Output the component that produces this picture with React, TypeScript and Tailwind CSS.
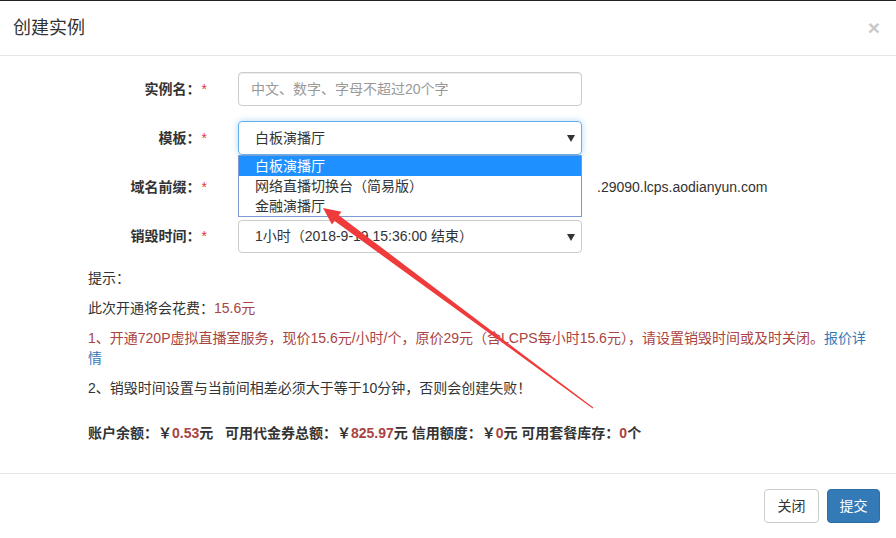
import React from "react";

const font = { fontFamily: '"Liberation Sans", "Noto Sans CJK SC", sans-serif' };

function Label({ text }: { text: string }) {
  return (
    <div className="w-[207px] mr-[31px] text-right font-bold text-[14px] text-[#333] leading-[34px]">
      {text}
      <span className="text-[#e4393c] font-normal ml-[1px]">*</span>
    </div>
  );
}

function Caret() {
  return (
    <span className="absolute right-[6px] top-[13px] w-0 h-0 border-l-[4px] border-r-[4px] border-t-[7px] border-l-transparent border-r-transparent border-t-[#333]" />
  );
}

export default function App() {
  return (
    <div className="relative w-[896px] h-[538px] bg-white text-[14px] text-[#333] overflow-hidden border-t border-[#222]" style={font}>
      {/* header */}
      <div className="h-[55px] border-b border-[#e5e5e5] flex items-center justify-between pl-[13px] pr-[16px]">
        <h4 className="text-[18px] text-[#333] leading-none">创建实例</h4>
        <span className="text-[21px] font-bold text-[#c8c8c8] leading-none -mt-[2px]">×</span>
      </div>

      {/* body */}
      <div className="h-[417px] pt-[16px]">
        <div className="flex items-center mb-[15px]">
          <Label text="实例名：" />
          <div className="w-[344px] h-[34px] border border-[#ccc] rounded-[4px] px-[12px] flex items-center text-[#999] shadow-[inset_0_1px_1px_rgba(0,0,0,0.075)]">
            中文、数字、字母不超过20个字
          </div>
        </div>

        <div className="flex items-center mb-[15px]">
          <Label text="模板：" />
          <div className="relative w-[344px] h-[34px] border border-[#66afe9] rounded-[4px] pl-[16px] flex items-center text-[#333] shadow-[0_0_6px_rgba(102,175,233,0.5)]">
            白板演播厅
            <Caret />
            <div className="absolute left-[-1px] top-[33px] w-[344px] h-[62px] bg-white border border-[#7a9cd3] z-10 text-[14px]">
              <div className="h-[20px] leading-[20px] pl-[16px] bg-[#1e90ff] text-white">白板演播厅</div>
              <div className="h-[20px] leading-[20px] pl-[16px] text-[#333]">网络直播切换台（简易版）</div>
              <div className="h-[20px] leading-[20px] pl-[16px] text-[#333]">金融演播厅</div>
            </div>
          </div>
        </div>

        <div className="flex items-center mb-[15px]">
          <Label text="域名前缀：" />
          <div className="w-[344px] h-[34px] border border-[#ccc] rounded-[4px]" />
          <span className="ml-[15px] text-[#333]">.29090.lcps.aodianyun.com</span>
        </div>

        <div className="flex items-center mb-[15px]">
          <Label text="销毁时间：" />
          <div className="relative w-[344px] h-[33px] border border-[#ccc] rounded-[4px] pl-[16px] flex items-center text-[#333]">
            1小时（2018-9-19 15:36:00 结束）
            <Caret />
          </div>
        </div>

        <div className="pl-[88px] pr-[15px] leading-[20px]">
          <p className="mb-[10px]">提示：</p>
          <p className="mb-[10px]">
            此次开通将会花费：<span className="text-[#a94442]">15.6元</span>
          </p>
          <p className="mb-[10px] text-[#a94442]">
            <span className="whitespace-nowrap">
              1、开通720P虚拟直播室服务，现价15.6元/小时/个，原价29元（含LCPS每小时15.6元），请设置销毁时间或及时关闭。
              <span className="text-[#337ab7]">报价详</span>
            </span>
            <br />
            <span className="text-[#337ab7]">情</span>
          </p>
          <p className="mb-[10px]">2、销毁时间设置与当前间相差必须大于等于10分钟，否则会创建失败！</p>
          <p className="pt-[15px] font-bold">
            账户余额：￥<span className="text-[#a94442]">0.53</span>元&nbsp;&nbsp; 可用代金券总额：￥
            <span className="text-[#a94442]">825.97</span>元 信用额度：￥<span className="text-[#a94442]">0</span>元 可用套餐库存：
            <span className="text-[#a94442]">0</span>个
          </p>
        </div>
      </div>

      {/* footer */}
      <div className="h-[65px] border-t border-[#e5e5e5] flex items-center justify-end gap-[8px] pr-[16px]">
        <button className="h-[34px] w-[55px] border border-[#ccc] rounded-[4px] bg-white text-[#333]">关闭</button>
        <button className="h-[34px] w-[53px] border border-[#2e6da4] rounded-[4px] bg-[#337ab7] text-white">提交</button>
      </div>

      {/* annotation arrow */}
      <svg className="absolute inset-0 pointer-events-none z-20" width="896" height="538">
        <polygon
          points="323,207 341.5,210.7 338.8,214.3 593.3,406.6 592.7,407.4 334.6,219.9 331.9,223.5"
          fill="#ef3b3b"
        />
      </svg>
    </div>
  );
}
